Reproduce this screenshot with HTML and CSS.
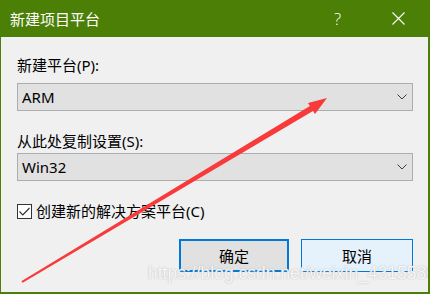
FILE: index.html
```html
<!DOCTYPE html>
<html lang="zh-CN">
<head>
<meta charset="utf-8">
<title>新建项目平台</title>
<link rel="stylesheet" href="styles.css">
</head>
<body>
<div class="window">
  <div class="titlebar">
    <span class="title">新建项目平台</span>
    <span class="help">?</span>
    <span class="close">
      <svg width="13" height="13" viewBox="0 0 13 13"><path d="M0.5 0.5 L12.5 12.5 M12.5 0.5 L0.5 12.5" stroke="#fff" stroke-width="1.1" fill="none"/></svg>
    </span>
  </div>
  <div class="content">
    <label class="label">新建平台(P):</label>
    <div class="select">
      <span class="value">ARM</span>
      <svg class="chev" width="10" height="6" viewBox="0 0 10 6"><path d="M0.5 0.5 L5 5 L9.5 0.5" stroke="#3c3c3c" stroke-width="1" fill="none"/></svg>
    </div>
    <label class="label second">从此处复制设置(S):</label>
    <div class="select">
      <span class="value">Win32</span>
      <svg class="chev" width="10" height="6" viewBox="0 0 10 6"><path d="M0.5 0.5 L5 5 L9.5 0.5" stroke="#3c3c3c" stroke-width="1" fill="none"/></svg>
    </div>
    <div class="check-row">
      <span class="checkbox">
        <svg width="11" height="9" viewBox="0 0 11 9"><path d="M0.5 4.5 L3.8 7.8 L10.5 1" stroke="#333" stroke-width="1.2" fill="none"/></svg>
      </span>
      <span class="check-label">创建新的解决方案平台(C)</span>
    </div>
    <div class="buttons">
      <button class="btn primary">确定</button>
      <button class="btn cancel">取消</button>
    </div>
  </div>
  <div class="watermark">https://blog.csdn.net/weixin_43155866</div>
  <svg class="arrow" width="430" height="294" viewBox="0 0 430 294">
    <polygon points="21.3,281.3 309.9,105.9 308,103 327,98 315,114 313,111.1 22.7,282.7" fill="#f83a3a"/>
  </svg>
</div>
</body>
</html>
```

FILE: styles.css
```css
html, body {
  margin: 0;
  padding: 0;
  background: #f0f0f0;
}

.window {
  position: relative;
  width: 430px;
  height: 294px;
  box-sizing: border-box;
  background: #f0f0f0;
  border-left: 1px solid #4b7f05;
  border-right: 2px solid #4b7f05;
  border-bottom: 2px solid #4b7f05;
  font-family: "Noto Sans", "Noto Sans CJK SC", sans-serif;
  color: #000;
  overflow: hidden;
}

.titlebar {
  height: 37px;
  background: #4b7f05;
  display: flex;
  align-items: center;
  color: #fff;
  margin-right: -2px;
}

.title {
  font-family: "Noto Sans CJK SC", sans-serif;
  font-size: 15px;
  line-height: 20px;
  margin-left: 9px;
  margin-top: 1px;
  flex: 1;
}

.help {
  font-family: "Open Sans", sans-serif;
  font-size: 17px;
  font-weight: 300;
  line-height: 20px;
  width: 12px;
  margin-right: 46px;
  margin-top: 0;
}

.close {
  width: 13px;
  height: 13px;
  margin-right: 25px;
  display: flex;
}

.content {
  padding: 18px 15px 0 16px;
  display: flex;
  flex-direction: column;
}

.label {
  font-family: "Noto Sans", "Noto Sans CJK SC", sans-serif;
  font-size: 15px;
  line-height: 20px;
  height: 20px;
  margin-bottom: 8px;
}

.label.second {
  margin-top: 20px;
  margin-bottom: 2px;
}

.select {
  height: 28px;
  box-sizing: border-box;
  border: 1px solid #adadad;
  background: #e1e1e1;
  display: flex;
  align-items: center;
  padding: 0 5px 0 4px;
}

.value {
  font-family: "Noto Sans", sans-serif;
  font-size: 15px;
  flex: 1;
}

.chev {
  display: block;
}

.check-row {
  display: flex;
  align-items: center;
  margin-top: 21px;
  height: 18px;
}

.checkbox {
  width: 15px;
  height: 15px;
  box-sizing: border-box;
  border: 1px solid #333;
  background: #fff;
  display: flex;
  align-items: center;
  justify-content: center;
}

.check-label {
  font-family: "Noto Sans", "Noto Sans CJK SC", sans-serif;
  font-size: 15px;
  line-height: 20px;
  margin-left: 4px;
}

.buttons {
  display: flex;
  justify-content: flex-end;
  gap: 12px;
  margin-top: 19px;
}

.btn {
  font-family: "Noto Sans CJK SC", sans-serif;
  font-size: 15px;
  width: 110px;
  height: 33px;
  box-sizing: border-box;
  color: #000;
  padding: 0;
}

.btn.primary {
  border: 2px solid #0078d7;
  background: #e1e1e1;
  width: 110px;
}

.btn.cancel {
  border: 1px solid #0078d7;
  background: #e5f1fb;
  width: 112px;
}

.watermark {
  position: absolute;
  left: 147px;
  top: 263px;
  font-family: "Liberation Sans", sans-serif;
  font-size: 17.5px;
  line-height: 20px;
  color: rgba(255, 255, 255, 0.9);
  text-shadow: 0 0 1px rgba(160, 160, 160, 0.7), 0 0 2px rgba(200, 200, 200, 0.5);
  white-space: nowrap;
}

.arrow {
  position: absolute;
  left: -1px;
  top: 0;
  pointer-events: none;
}
```
